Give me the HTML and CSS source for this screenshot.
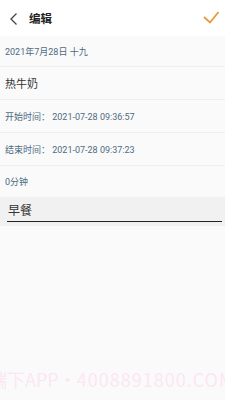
FILE: index.html
```html
<!DOCTYPE html>
<html lang="zh">
<head>
<meta charset="utf-8">
<link rel="stylesheet" href="styles.css">
</head>
<body>
<div class="page">
  <header class="topbar">
    <svg class="back" width="10" height="14" viewBox="0 0 10 14"><path d="M7.5 1.5 L2 7 L7.5 12.5" fill="none" stroke="#444" stroke-width="1.3"/></svg>
    <span class="title">编辑</span>
    <svg class="check" width="17" height="13" viewBox="0 0 17 13"><path d="M1 6 L7 11.5 L15.5 1" fill="none" stroke="#e69a3c" stroke-width="1.8"/></svg>
  </header>
  <div class="row row-date"><span class="info">2021年7月28日 十九</span></div>
  <div class="row row-name"><span class="name">热牛奶</span></div>
  <div class="row"><span class="info">开始时间： 2021-07-28 09:36:57</span></div>
  <div class="row"><span class="info">结束时间： 2021-07-28 09:37:23</span></div>
  <div class="row row-last"><span class="info">0分钟</span></div>
  <div class="meal"><div class="meal-input">早餐</div></div>
</div>
<div class="watermark">端下APP・<span class="wm-num">4008891800.COM</span></div>
</body>
</html>
```
FILE: styles.css
```css
html, body {
  margin: 0;
  padding: 0;
  background: #fafafa;
  font-family: Roboto, "Noto Sans CJK SC", sans-serif;
}
.page {
  width: 225px;
  height: 400px;
  background: #fafafa;
  overflow: hidden;
}
.topbar {
  height: 36px;
  background: #fff;
  display: flex;
  align-items: center;
  padding: 0 5px 0 9px;
  box-sizing: border-box;
}
.back { flex: none; margin-top: 1px; }
.title {
  font-size: 11.5px;
  font-weight: bold;
  color: #222;
  margin-left: 10px;
  flex: 1;
}
.check { flex: none; margin-top: -1px; }
.row {
  height: 33px;
  display: flex;
  align-items: center;
  padding-left: 5px;
  border-bottom: 1px solid #efefef;
  box-sizing: border-box;
}
.row-date { height: 31px; }
.row-last { height: 31px; border-bottom: none; }
.info {
  font-size: 9px;
  color: #4f6a82;
}
.name {
  font-size: 11px;
  color: #333;
}
.meal {
  height: 29px;
  background: #f1f1f1;
  padding: 0 3px 0 7px;
  box-sizing: border-box;
}
.meal-input {
  font-size: 12px;
  color: #333;
  line-height: 16px;
  padding: 6px 0 2px 1px;
  border-bottom: 1.5px solid #222;
}
.watermark {
  position: absolute;
  left: -11px;
  top: 369px;
  font-size: 18px;
  line-height: 20px;
  white-space: nowrap;
  color: #fde6f3;
  font-family: "Noto Sans CJK SC", sans-serif;
}
.wm-num { letter-spacing: 1px; }
```
